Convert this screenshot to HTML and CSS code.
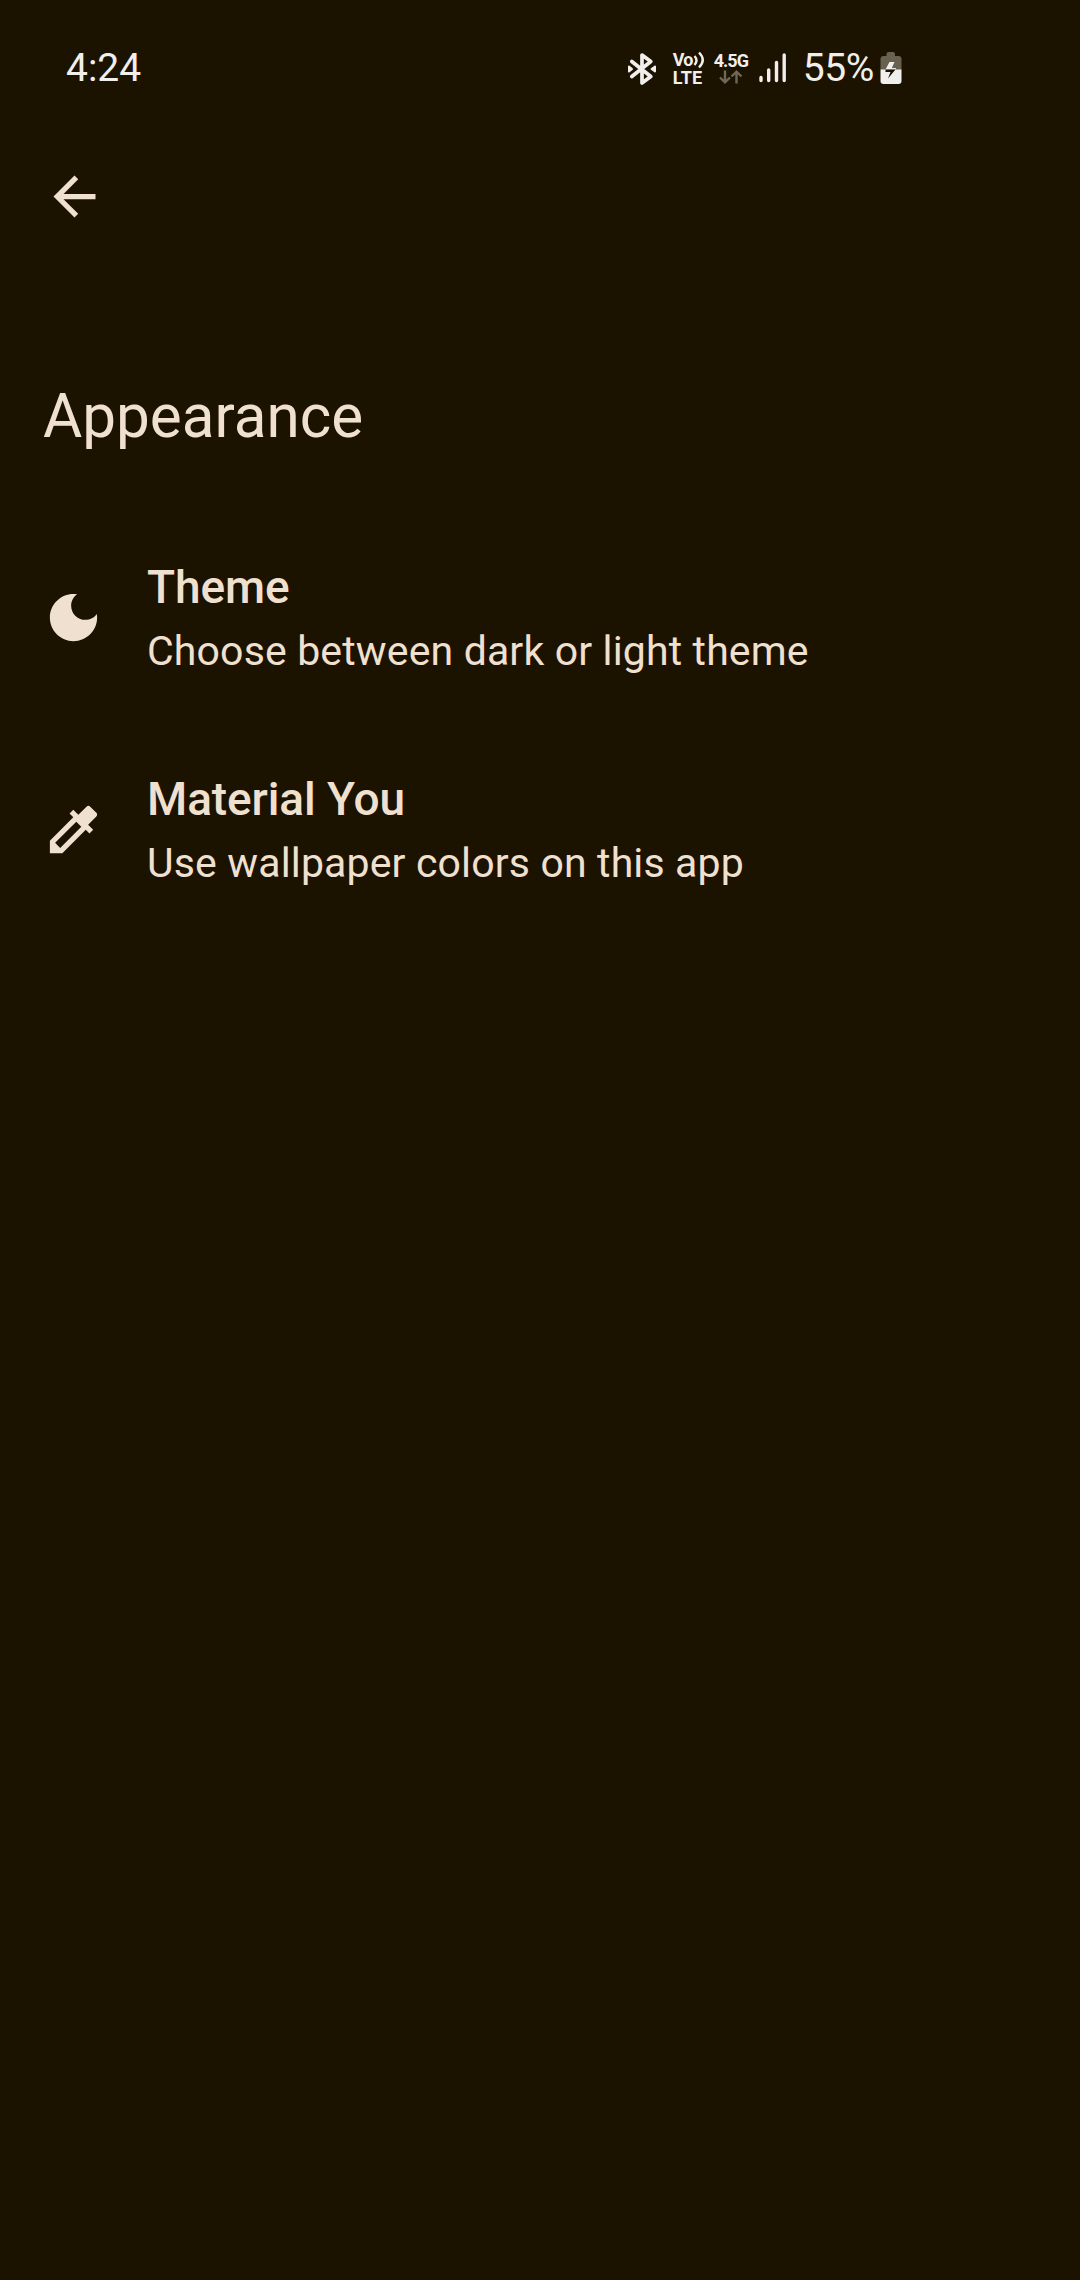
FILE: index.html
```html
<!DOCTYPE html>
<html lang="en">
<head>
<meta charset="utf-8">
<title>Appearance</title>
<link rel="stylesheet" href="styles.css">
</head>
<body>
<header class="status">
  <span class="clock">4:24</span>
  <div class="indicators">
    <svg class="bluetooth" width="30" height="34" viewBox="0 0 30 34"><path d="M4.800 9.500L23.800 24.500L15 31V3L23.800 9.500L4.800 24.500" fill="none" stroke="currentColor" stroke-width="3.700" stroke-linejoin="round" stroke-linecap="round"/><path d="M2 14.500L5 17L2 19.500ZM28 14.500L24.500 17L28 19.500Z" fill="currentColor" stroke="currentColor" stroke-width="2" stroke-linejoin="round"/></svg>
    <div class="volte">
      <div class="vo"><span>Vo</span><svg width="12" height="18" viewBox="0 0 12 18"><path d="M1.500 5Q5.500 9.500 1.500 14M6 1.500Q13.500 9 6 16.500" fill="none" stroke="currentColor" stroke-width="2.400"/></svg></div>
      <div class="lte">LTE</div>
    </div>
    <div class="network">
      <div class="gen">4.5G</div>
      <svg class="traffic" width="24" height="14" viewBox="0 0 24 14"><path d="M6 0.500V12M1 7.500L6 12.300L11 7.500M17.500 13.500V2M12.500 6.500L17.500 1.700L22.500 6.500" fill="none" stroke="currentColor" stroke-width="2.400"/></svg>
    </div>
    <svg class="signal" width="28" height="30" viewBox="0 0 28 30"><path d="M2 24.500V27.500M9.700 17V27.500M17.500 9.500V27.500M25.200 2V27.500" fill="none" stroke="currentColor" stroke-width="3.400" stroke-linecap="round"/></svg>
    <span class="percent">55%</span>
    <svg class="battery" width="22" height="34" viewBox="0 0 22 34"><path d="M6.500 5V3Q6.500 1 8.500 1H13Q15 1 15 3V5H18.500Q21.500 5 21.500 8V19H0.500V8Q0.500 5 3.500 5Z" fill="#68614f"/><path d="M0.500 18.500H21.500V30Q21.500 33 18.500 33H3.500Q0.500 33 0.500 30Z" fill="#efefed"/><path d="M9.500 11H14.500L11.800 17H16L15.500 18.500H5.500Z" fill="#efefed"/><path d="M5.500 18.500H15.500L8 27.500L10.500 21H5.500Z" fill="#1a1200"/></svg>
  </div>
</header>
<nav class="toolbar">
  <svg width="63" height="63" viewBox="0 0 24 24"><path d="M20 11H7.830l5.590-5.590L12 4l-8 8 8 8 1.410-1.410L7.830 13H20v-2z" fill="currentColor"/></svg>
</nav>
<h1 class="title">Appearance</h1>
<main class="settings">
  <div class="row">
    <svg width="63" height="63" viewBox="0 0 24 24"><path d="M12 3c-4.970 0-9 4.030-9 9s4.030 9 9 9 9-4.030 9-9c0-.460-.040-.920-.100-1.360-.980 1.370-2.580 2.260-4.400 2.260-2.980 0-5.400-2.420-5.400-5.400 0-1.810.890-3.420 2.260-4.400C12.920 3.040 12.460 3 12 3z" fill="currentColor"/></svg>
    <div>
      <div class="name">Theme</div>
      <div class="summary">Choose between dark or light theme</div>
    </div>
  </div>
  <div class="row">
    <svg width="63" height="63" viewBox="0 0 24 24"><path d="M20.710 5.630l-2.340-2.340c-.390-.390-1.020-.390-1.410 0l-3.120 3.120-1.930-1.910-1.410 1.410 1.420 1.420L3 16.250V21h4.750l8.920-8.920 1.420 1.420 1.410-1.410-1.920-1.920 3.120-3.120c.400-.400.400-1.030.010-1.420zM6.920 19L5 17.080l8.060-8.060 1.920 1.920L6.920 19z" fill="currentColor"/></svg>
    <div>
      <div class="name">Material You</div>
      <div class="summary">Use wallpaper colors on this app</div>
    </div>
  </div>
</main>
</body>
</html>
```
FILE: styles.css
```css
* { box-sizing: border-box; }
body {
  margin: 0;
  min-height: 2280px;
  background: #1c1200;
  color: #f0e0d0;
  font-family: Roboto, sans-serif;
}
svg { display: block; flex: none; }
.status {
  display: flex;
  align-items: center;
  justify-content: space-between;
  height: 135px;
  padding: 0 178px 0 66px;
  color: #f1efec;
  font-size: 39px;
}
.indicators { display: flex; align-items: center; }
.bluetooth { margin: 2px 16px 0 0; }
.volte, .network {
  padding-top: 1px;
  font-size: 18px;
  font-weight: 700;
  line-height: 17px;
}
.volte { width: 33px; margin-right: 8px; }
.vo { display: flex; height: 18px; letter-spacing: -0.8px; }
.lte { letter-spacing: 0.2px; }
.network { width: 36px; margin-right: 9px; }
.gen { letter-spacing: -1px; }
.traffic { margin: 1px 0 1px 5px; color: #6f6858; }
.signal { margin-right: 16px; }
.percent { margin-right: 6px; letter-spacing: -0.4px; }
.toolbar { height: 225px; padding: 30px 43px; }
.title {
  margin: 0;
  height: 151px;
  padding: 22px 43px 0;
  font-size: 60.2px;
  font-weight: 400;
  line-height: 70px;
}
.row {
  display: flex;
  align-items: center;
  gap: 42px;
  height: 212px;
  padding: 0 42px;
}
.name { font-size: 46px; font-weight: 500; line-height: 68px; letter-spacing: -0.1px; }
.summary { font-size: 41px; line-height: 60px; letter-spacing: 0.15px; }
```
